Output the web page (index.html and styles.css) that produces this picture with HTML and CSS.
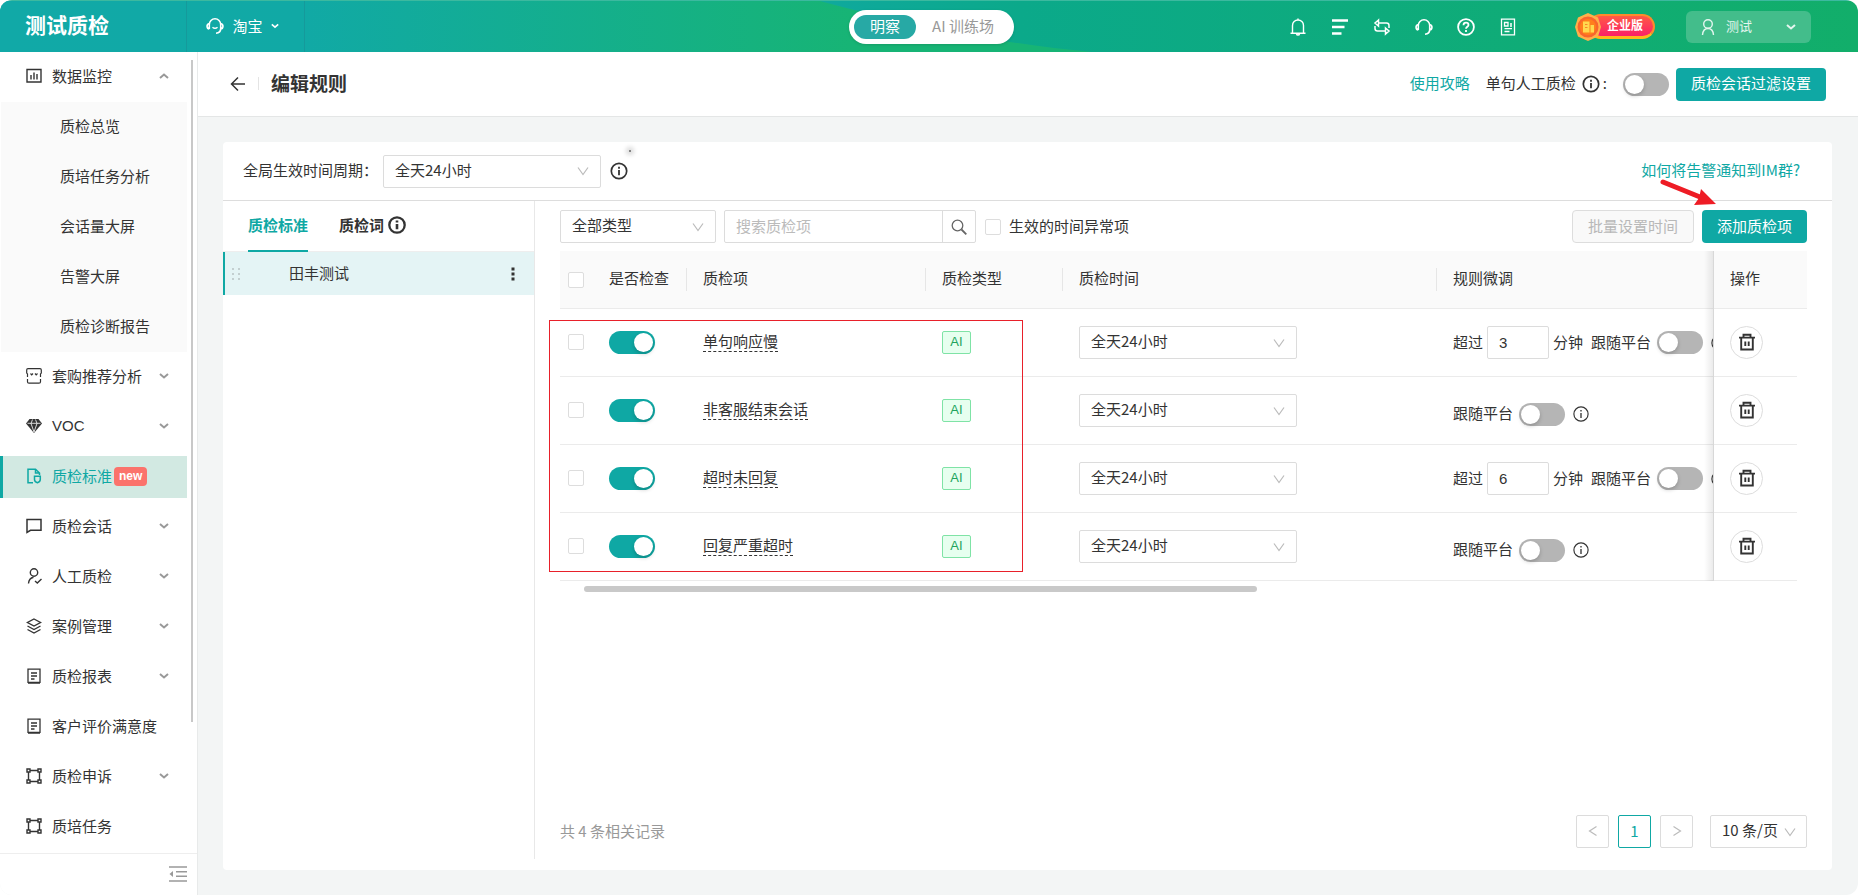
FILE: index.html
```html
<!DOCTYPE html>
<html lang="zh-CN">
<head>
<meta charset="utf-8">
<title>编辑规则</title>
<link rel="stylesheet" href="styles.css">
</head>
<body>
<svg class="sprite" aria-hidden="true">
  <symbol id="down" viewBox="0 0 12 12"><path d="M1 2.500 6 9.500l5-7" fill="none" stroke="currentColor" stroke-width="1.200"/></symbol>
  <symbol id="chev" viewBox="0 0 10 8"><path d="M1 2l4 3.500L9 2" fill="none" stroke="currentColor" stroke-width="2"/></symbol>
  <symbol id="info" viewBox="0 0 18 18"><circle cx="9" cy="9" r="7.700" fill="none" stroke="currentColor" stroke-width="1.700"/><path d="M9 8v5.200M9 4.800v1.900" stroke="currentColor" stroke-width="1.800"/></symbol>
  <symbol id="info-bold" viewBox="0 0 18 18"><circle cx="9" cy="9" r="7.700" fill="none" stroke="currentColor" stroke-width="2.300"/><path d="M9 8v5.200M9 4.500v2" stroke="currentColor" stroke-width="2.600"/></symbol>
  <symbol id="info-thin" viewBox="0 0 18 18"><circle cx="9" cy="9" r="8" fill="none" stroke="currentColor" stroke-width="1.300"/><path d="M9 7.800v5.700M9 4.500v1.800" stroke="currentColor" stroke-width="1.500"/></symbol>
  <symbol id="headset" viewBox="0 0 18 18"><path d="M3.300 12V7.500a5.700 5.700 0 0 1 11.400 0v4c0 2.700-1.700 4.500-4.700 4.700M3.300 6.500C.3 7 .3 11.500 3.300 12M14.700 6.500c3 .5 3 5 0 5.500" fill="none" stroke="currentColor" stroke-width="1.600"/></symbol>
  <symbol id="report" viewBox="0 0 16 16"><path d="M2 1.200h12v13.200H2zM5 5h6M5 8h6M5 11h3.500M2 15h12" fill="none" stroke="currentColor" stroke-width="1.300"/></symbol>
  <symbol id="nodes" viewBox="0 0 16 16"><path d="M1 1h3v3H1zM12 1h3v3h-3zM1 12h3v3H1zM12 12h3v3h-3zM4 2.500h8M4 13.500h8M2.500 4v8M13.500 4v8" fill="none" stroke="currentColor" stroke-width="1.400"/></symbol>
  <symbol id="trash" viewBox="0 0 18 18"><path d="M1 4.600h16M5.500 4V1.700h7V4M3.200 5v11.500h11.600V5M7.300 8.500v4.500M10.700 8.500v4.500" fill="none" stroke="currentColor" stroke-width="1.900"/></symbol>
</svg>

<div class="app">
  <header class="topbar">
    <svg class="wave" viewBox="0 0 1858 52" preserveAspectRatio="none" aria-hidden="true"><defs><linearGradient id="wg"><stop offset="0" stop-color="#11a9a7"/><stop offset=".28" stop-color="#11a9a5"/><stop offset=".78" stop-color="#17b475"/><stop offset="1" stop-color="#17b475"/></linearGradient></defs><path d="M0 0H820C900 22 1000 44 1092 52H0z" fill="url(#wg)"/></svg>
    <div class="brand">测试质检</div>
    <button class="platform"><svg class="i18" viewBox="0 0 18 18"><use href="#headset"/><path d="M6.500 10.200c1.500 1.300 3.500 1.300 5 0" fill="none" stroke="currentColor" stroke-width="1.500"/></svg>淘宝<svg class="i8"><use href="#chev"/></svg></button>
    <nav class="modes"><a class="mode on" href="#">明察</a><a class="mode" href="#">AI 训练场</a></nav>
    <div class="tools">
      <button aria-label="通知"><svg class="i18" viewBox="0 0 18 18"><path d="M3.500 15V7.500a5.500 5.500 0 0 1 11 0V15M1.500 15.200h15M9 2V.5M7.500 16c.3 1.400 2.700 1.400 3 0" fill="none" stroke="currentColor" stroke-width="1.400"/></svg></button>
      <button aria-label="列表"><svg class="i18" viewBox="0 0 18 18"><path d="M1 2.500h16M1 9h12.500M1 15.500h9.500" stroke="currentColor" stroke-width="2.600"/></svg></button>
      <button aria-label="切换"><svg class="i18" viewBox="0 0 18 18"><path d="M5 5h8.500q2.500 0 2.500 2.500V10M13 13H4.500Q2 13 2 10.500V8M5.500 2 2 5l3.500 3zM12.500 10l3.500 3-3.500 3z" fill="none" stroke="currentColor" stroke-width="1.500"/></svg></button>
      <button aria-label="客服"><svg class="i18"><use href="#headset"/></svg></button>
      <button aria-label="帮助"><svg class="i18" viewBox="0 0 18 18"><circle cx="9" cy="9" r="7.900" fill="none" stroke="currentColor" stroke-width="1.800"/><path d="M6.500 7.200C6.500 3.800 11.500 4 11.500 7c0 1.800-2.500 1.800-2.500 3.800M9 12v1.900" fill="none" stroke="currentColor" stroke-width="1.800"/></svg></button>
      <button aria-label="文档"><svg class="i18" viewBox="0 0 18 18"><path d="M2.500 1.200h13v15.600h-13zM5.500 4.500h3.500v3.500H5.500zM11 6h2M11 8h2M5.500 10.700h7.500M5.500 13.500h5" fill="none" stroke="currentColor" stroke-width="1.300"/></svg></button>
    </div>
    <div class="edition">
      <svg viewBox="0 0 28 30" aria-hidden="true"><path d="M14 1l10 4.500 3 9.500-3 9.500L14 29 4 24.500 1 15 4 5.500z" fill="#ffb04a"/><circle cx="14" cy="15" r="10.500" fill="#f8662c"/><circle cx="14" cy="15" r="8" fill="#ff7f1c"/><path d="M9 9.500h6.500v11H9zM16.500 13H20v7.500h-3.500z" fill="#ffd94f"/><path d="M11 12.500h2.500M11 15.500h2.500" stroke="#f8862c"/></svg><span>企业版</span>
    </div>
    <button class="user"><svg class="i18" viewBox="0 0 18 18"><circle cx="9" cy="6" r="4.300" fill="none" stroke="currentColor" stroke-width="1.400"/><path d="M3.500 17c.3-4 2.500-6.500 5.500-6.500s5.200 2.500 5.500 6.500" fill="none" stroke="currentColor" stroke-width="1.400"/></svg><span>测试</span><svg class="i10"><use href="#chev"/></svg></button>
  </header>

  <aside class="side">
    <nav class="menu">
      <a class="item" href="#"><svg class="i16" viewBox="0 0 16 16"><path d="M1 1.500h14v12.500H1z M5 7v4.500M8 4.500v7M11 6v5.500" fill="none" stroke="currentColor" stroke-width="1.400"/></svg><span>数据监控</span><svg class="i10 arrow flip"><use href="#chev"/></svg></a>
      <div class="sub">
        <a class="item" href="#">质检总览</a><a class="item" href="#">质培任务分析</a><a class="item" href="#">会话量大屏</a><a class="item" href="#">告警大屏</a><a class="item" href="#">质检诊断报告</a>
      </div>
      <a class="item" href="#"><svg class="i16" viewBox="0 0 16 16"><path d="M1.500 9V6L.7 5V2q0-1.300 1.300-1.300h12q1.300 0 1.300 1.300v3l-.8 1v3M4.500 5.500l1.200 1.300L7 5.500M9 5.500l1.200 1.300 1.300-1.300M1.500 11v2.700q0 1.500 1.500 1.500h10q1.500 0 1.500-1.500V11" fill="none" stroke="currentColor" stroke-width="1.200"/></svg><span>套购推荐分析</span><svg class="i10 arrow"><use href="#chev"/></svg></a>
      <a class="item" href="#"><svg class="i16" viewBox="0 0 16 16"><path d="M3.500 1h9L16 5.500 8 15 0 5.500z" fill="currentColor"/><path d="M1.500 5.300h13M5 5.500 8 14l3-8.500M5 5.500 6.500 1.500M11 5.500 9.500 1.500" fill="none" stroke="#fff" stroke-width=".8"/></svg><span class="latin">VOC</span><svg class="i10 arrow"><use href="#chev"/></svg></a>
      <a class="item current" href="#"><svg class="i16" viewBox="0 0 16 16"><path d="M7 14.800H2V1.200h7.500L13.500 5v2M9.500 1.200V5h4" fill="none" stroke="currentColor" stroke-width="1.500"/><path d="M8.500 8.300h5.800v3.200c0 2-1.500 2.800-2.900 3.300-1.400-.5-2.900-1.300-2.900-3.300z" fill="none" stroke="currentColor" stroke-width="1.500"/></svg><span>质检标准</span><b class="new">new</b></a>
      <a class="item" href="#"><svg class="i16" viewBox="0 0 16 16"><path d="M1 1.500h14v10.800H4.500L1 14.500z" fill="none" stroke="currentColor" stroke-width="1.500"/></svg><span>质检会话</span><svg class="i10 arrow"><use href="#chev"/></svg></a>
      <a class="item" href="#"><svg class="i16" viewBox="0 0 16 16"><circle cx="8" cy="4.500" r="3.700" fill="none" stroke="currentColor" stroke-width="1.400"/><path d="M2.500 15.500c.3-3.500 2-5.500 5-6.200M9 13l2.300 2L15.500 11" fill="none" stroke="currentColor" stroke-width="1.400"/></svg><span>人工质检</span><svg class="i10 arrow"><use href="#chev"/></svg></a>
      <a class="item" href="#"><svg class="i16" viewBox="0 0 16 16"><path d="M8 1l6.500 3.500L8 8 1.500 4.500zM1.500 8 8 11.500 14.500 8M1.500 11.500 8 15l6.500-3.500" fill="none" stroke="currentColor" stroke-width="1.400"/></svg><span>案例管理</span><svg class="i10 arrow"><use href="#chev"/></svg></a>
      <a class="item" href="#"><svg class="i16"><use href="#report"/></svg><span>质检报表</span><svg class="i10 arrow"><use href="#chev"/></svg></a>
      <a class="item" href="#"><svg class="i16"><use href="#report"/></svg><span>客户评价满意度</span></a>
      <a class="item" href="#"><svg class="i16"><use href="#nodes"/></svg><span>质检申诉</span><svg class="i10 arrow"><use href="#chev"/></svg></a>
      <a class="item" href="#"><svg class="i16"><use href="#nodes"/></svg><span>质培任务</span></a>
    </nav>
    <i class="thumb"></i>
    <div class="side-foot"><button aria-label="收起菜单"><svg class="i18" viewBox="0 0 18 18"><path d="M0 2h18M7 6.800h11M7 11.300h11M0 16h18" stroke="currentColor" stroke-width="1.400"/><path d="M4 6v6L.5 9z" fill="currentColor"/></svg></button></div>
  </aside>

  <main class="main">
    <div class="pagehead">
      <button class="back" aria-label="返回"><svg class="i16" viewBox="0 0 16 16"><path d="M8 1.500 1.500 8 8 14.500M1.500 8H15" fill="none" stroke="currentColor" stroke-width="1.500"/></svg></button>
      <h1>编辑规则</h1>
      <div class="headright">
        <a class="link" href="#">使用攻略</a>
        <label class="manual" for="manual"><span>单句人工质检</span><svg class="i18"><use href="#info"/></svg><span>:</span></label>
        <input class="switch" type="checkbox" id="manual">
        <button class="btn primary">质检会话过滤设置</button>
      </div>
    </div>

    <section class="card">
      <div class="period">
        <label for="period">全局生效时间周期：</label>
        <span class="select wide"><select id="period"><option>全天24小时</option></select><svg class="i12"><use href="#down"/></svg></span>
        <svg class="i18"><use href="#info"/></svg>
        <i class="spark"></i>
        <a class="link" href="#">如何将告警通知到IM群?</a>
        <svg class="pointer" viewBox="0 0 56 28" aria-hidden="true"><path d="M3 4 40 19" stroke="#ee1c25" stroke-width="5" stroke-linecap="round"/><path d="M41 11 56 26 34 27 39 20z" fill="#ee1c25"/></svg>
      </div>
      <div class="split">
        <div class="left">
          <div class="tabs"><button class="tab on">质检标准</button><button class="tab">质检词<svg class="i18"><use href="#info-bold"/></svg></button></div>
          <div class="standard">
            <svg class="grip" viewBox="0 0 10 12"><path d="M1 1h2M7 1h2M1 6h2M7 6h2M1 11h2M7 11h2" stroke="#c3cfd0" stroke-width="2"/></svg>
            <span>田丰测试</span>
            <button aria-label="更多"><svg class="more" viewBox="0 0 4 14"><path d="M.5 2h3M.5 7h3M.5 12h3" stroke="#333" stroke-width="3"/></svg></button>
          </div>
        </div>
        <div class="right">
          <div class="filters">
            <span class="select kind"><select aria-label="类型"><option>全部类型</option></select><svg class="i12"><use href="#down"/></svg></span>
            <div class="search"><input type="text" placeholder="搜索质检项" aria-label="搜索质检项"><button aria-label="搜索"><svg class="i16" viewBox="0 0 16 16"><circle cx="6.500" cy="6.500" r="5.300" fill="none" stroke="currentColor" stroke-width="1.300"/><path d="M10.500 10.500 15.300 15.300" stroke="currentColor" stroke-width="1.800"/></svg></button></div>
            <label class="odd"><input class="check" type="checkbox"><span>生效的时间异常项</span></label>
            <button class="btn off" disabled>批量设置时间</button>
            <button class="btn primary">添加质检项</button>
          </div>
          <div class="tablebox">
          <table>
            <colgroup><col class="c1"><col class="c2"><col class="c3"><col class="c4"><col class="c5"><col><col class="c7"><col class="c8"></colgroup>
            <thead><tr><th class="pick"><input class="check" type="checkbox" aria-label="全选"></th><th><span>是否检查</span></th><th><span>质检项</span></th><th><span>质检类型</span></th><th><span>质检时间</span></th><th><span>规则微调</span></th><th class="op"><span>操作</span></th><th></th></tr></thead>
            <tbody>
              <tr><td class="pick"><input class="check" type="checkbox" aria-label="选择"></td><td><input class="switch" type="checkbox" checked aria-label="是否检查"></td><td><span class="name">单句响应慢</span></td><td><span class="tag">AI</span></td><td><span class="select wide"><select aria-label="质检时间"><option>全天24小时</option></select><svg class="i12"><use href="#down"/></svg></span></td>
                <td class="tune"><div class="adjust"><label><span>超过</span><input class="num" type="text" value="3"><span>分钟</span></label><label class="follow"><span>跟随平台</span><input class="switch" type="checkbox"></label><svg class="i16"><use href="#info-thin"/></svg></div></td><td class="op"><button class="del" aria-label="删除"><svg class="i18"><use href="#trash"/></svg></button></td><td class="gut"></td></tr>
              <tr><td class="pick"><input class="check" type="checkbox" aria-label="选择"></td><td><input class="switch" type="checkbox" checked aria-label="是否检查"></td><td><span class="name">非客服结束会话</span></td><td><span class="tag">AI</span></td><td><span class="select wide"><select aria-label="质检时间"><option>全天24小时</option></select><svg class="i12"><use href="#down"/></svg></span></td>
                <td class="tune"><div class="adjust low"><label class="follow"><span>跟随平台</span><input class="switch" type="checkbox"></label><svg class="i16"><use href="#info-thin"/></svg></div></td><td class="op"><button class="del" aria-label="删除"><svg class="i18"><use href="#trash"/></svg></button></td><td class="gut"></td></tr>
              <tr><td class="pick"><input class="check" type="checkbox" aria-label="选择"></td><td><input class="switch" type="checkbox" checked aria-label="是否检查"></td><td><span class="name">超时未回复</span></td><td><span class="tag">AI</span></td><td><span class="select wide"><select aria-label="质检时间"><option>全天24小时</option></select><svg class="i12"><use href="#down"/></svg></span></td>
                <td class="tune"><div class="adjust"><label><span>超过</span><input class="num" type="text" value="6"><span>分钟</span></label><label class="follow"><span>跟随平台</span><input class="switch" type="checkbox"></label><svg class="i16"><use href="#info-thin"/></svg></div></td><td class="op"><button class="del" aria-label="删除"><svg class="i18"><use href="#trash"/></svg></button></td><td class="gut"></td></tr>
              <tr><td class="pick"><input class="check" type="checkbox" aria-label="选择"></td><td><input class="switch" type="checkbox" checked aria-label="是否检查"></td><td><span class="name">回复严重超时</span></td><td><span class="tag">AI</span></td><td><span class="select wide"><select aria-label="质检时间"><option>全天24小时</option></select><svg class="i12"><use href="#down"/></svg></span></td>
                <td class="tune"><div class="adjust low"><label class="follow"><span>跟随平台</span><input class="switch" type="checkbox"></label><svg class="i16"><use href="#info-thin"/></svg></div></td><td class="op"><button class="del" aria-label="删除"><svg class="i18"><use href="#trash"/></svg></button></td><td class="gut"></td></tr>
            </tbody>
          </table>
          <i class="mark"></i>
          </div>
          <div class="hscroll"></div>
          <div class="pager">
            <span class="total">共 4 条相关记录</span>
            <button aria-label="上一页"><svg class="i12" viewBox="0 0 12 12"><path d="M9.500 1.500 2.500 6l7 4.500" fill="none" stroke="currentColor" stroke-width="1.200"/></svg></button>
            <button class="on">1</button>
            <button aria-label="下一页"><svg class="i12" viewBox="0 0 12 12"><path d="M2.500 1.500l7 4.500-7 4.500" fill="none" stroke="currentColor" stroke-width="1.200"/></svg></button>
            <span class="select size"><select aria-label="每页条数"><option>10 条/页</option></select><svg class="i12"><use href="#down"/></svg></span>
          </div>
        </div>
      </div>
    </section>
  </main>
</div>
</body>
</html>
```
FILE: styles.css
```css
* { box-sizing: border-box; }
body { margin: 0; background: #fff; }
body, button, input, select { font: 15px/22px "Noto Sans CJK SC", "Liberation Sans", sans-serif; color: #333; }
button { background: none; border: 0; padding: 0; display: flex; align-items: center; justify-content: center; }
a { color: inherit; text-decoration: none; }
input, h1 { margin: 0; }
svg { display: block; flex: none; }
.sprite { display: none; }
.i8 { width: 8px; height: 8px; }
.i10 { width: 10px; height: 10px; }
.i12 { width: 12px; height: 12px; }
.i16 { width: 16px; height: 16px; }
.i18 { width: 18px; height: 18px; }

.app { display: grid; grid-template: 52px minmax(0, 1fr) / 198px minmax(0, 1fr); min-height: 100vh; border-radius: 12px; overflow: hidden; background: #f3f5f5; }

/* top bar */
.topbar { grid-column: 1 / -1; position: relative; display: flex; align-items: center; color: #fff; background: linear-gradient(90deg, #11a9a5 40%, #0ba98a 55%, #12ae6a); border-top: 1px solid #3cb99f; }
.wave { position: absolute; inset: 0; width: 100%; height: 100%; }
.topbar > :not(.wave) { position: relative; }
.brand { width: 186px; padding-left: 25px; padding-bottom: 6px; font-size: 21px; line-height: 28px; font-weight: 700; }
.platform { width: 119px; height: 51px; gap: 8px; padding: 0 6px 2px 0; color: #fff; border: solid #159a9b; border-width: 0 1px; }
.modes { margin: 0 auto 0 544px; display: flex; align-items: center; height: 34px; padding: 0 5px; background: #fff; border-radius: 17px; box-shadow: 0 1px 3px #0002; }
.mode { height: 24px; line-height: 22px; padding: 0 16px; border-radius: 12px; color: #999; }
.mode + .mode { padding-right: 15px; }
.mode.on { background: #27a9a5; color: #fff; }
.tools { display: flex; gap: 24px; }
.tools button { color: #fff; }
.edition { display: flex; align-items: center; margin: 0 31px 0 57px; }
.edition svg { width: 28px; height: 30px; z-index: 1; }
.edition span { margin-left: -14px; padding: 0 10px 0 17px; height: 25px; line-height: 18px; font-size: 12px; font-weight: 700; border: 2px solid #ff8a2c; border-bottom: 3px solid #ffb81c; border-radius: 13px; background: linear-gradient(#ff5a45, #fb1f68); }
.user { width: 125px; height: 32px; margin-right: 47px; padding: 0 15px 0 13px; gap: 9px; color: #e4f6ef; font-size: 13px; background: #43bd8b; border-radius: 6px; }
.user span { margin-right: auto; padding-bottom: 2px; }

/* side menu */
.side { position: relative; display: flex; flex-direction: column; background: #fff; border-right: 1px solid #e8eaea; }
.menu { flex: 1; display: flex; flex-direction: column; padding-right: 10px; }
.item { display: flex; align-items: center; height: 42px; margin: 4px 0; padding: 0 18px 2px 23px; border-left: 3px solid transparent; }
.menu > .item > span { margin-left: 10px; }
.arrow { margin-left: auto; color: #999; }
.flip { transform: rotate(180deg); }
.sub { display: flow-root; background: #fafafa; margin-left: 1px; }
.sub .item { padding-left: 56px; }
.sub .item + .item { margin-top: 8px; }
.latin { font-family: "Liberation Sans", sans-serif; }
.current { background: #d2e9e2; border-color: #0fa8a4; color: #0fa8a4; }
.new { margin-left: 2px; padding: 0 5px; border-radius: 4px; background: #fb736c; color: #fff; font: 700 12px/19px "Liberation Sans", sans-serif; }
.thumb { position: absolute; right: 4px; top: 8px; width: 2px; height: 662px; background: #c8c8c8; }
.side-foot { height: 42px; border-top: 1px solid #eee; display: flex; align-items: center; justify-content: flex-end; padding: 0 10px 2px; }
.side-foot button { color: #999; }

/* page heading */
.main { display: flex; flex-direction: column; min-width: 0; }
.pagehead { display: flex; align-items: center; height: 65px; padding: 0 32px; background: #fff; border-bottom: 1px solid #e4e6e6; }
.back { padding-right: 12px; }
h1 { padding: 0 0 2px 13px; font-size: 19px; line-height: 26px; position: relative; }
h1::before { content: ""; position: absolute; left: 0; top: 7px; height: 13px; border-left: 1px solid #e4e4e4; }
.headright { margin-left: auto; display: flex; align-items: center; }
.link, .manual span, .period label, .standard span, .odd span, .adjust span, .total { padding-bottom: 2px; }
.link { color: #0fa8a4; }
.manual { display: flex; align-items: center; gap: 6px; margin: 0 16px; }
.manual svg + span { margin-left: -3px; }
.btn { height: 33px; padding: 0 15px 2px; border-radius: 4px; white-space: nowrap; }
.headright .btn { margin-left: 7px; }
.primary { background: #0fa8a4; color: #fff; }
.off { border: 1px solid #ddd; background: #f9f9f9; color: #b8b8b8; }

.switch { appearance: none; flex: none; display: block; width: 46px; height: 23px; padding: 2px; border-radius: 12px; background: #b5b5b5; }
.switch::before { content: ""; display: block; width: 19px; height: 19px; border-radius: 50%; background: #fff; box-shadow: 0 2px 4px #0003; }
.switch:checked { background: #0fa8a4; }
.switch:checked::before { margin-left: auto; }
.check { appearance: none; flex: none; display: block; width: 16px; height: 16px; border: 1px solid #ddd; border-radius: 2px; background: #fff; }

.select { display: grid; align-items: center; height: 33px; border: 1px solid #dcdcdc; border-radius: 2px; background: #fff; }
.select > * { grid-area: 1 / 1; }
.select select { appearance: none; width: 100%; height: 31px; border: 0; padding: 0 11px 3px; background: none; }
.select svg { justify-self: end; margin-right: 11px; color: #bbb; pointer-events: none; }
.wide { width: 218px; }
.kind { width: 156px; }

/* card */
.card { flex: 1; display: flex; flex-direction: column; margin: 25px 26px 25px 25px; background: #fff; border-radius: 4px; }
.period { position: relative; display: flex; align-items: center; height: 59px; padding: 0 32px 0 20px; border-bottom: 1px solid #ddd; }
.period label { width: 140px; white-space: nowrap; }
.period > svg.i18 { margin-left: 9px; }
.period .link { margin-left: auto; }
.spark { align-self: flex-start; width: 2px; height: 2px; margin: 8px 0 0 1px; border-radius: 50%; background: #666; box-shadow: 0 0 4px 3px #0002; }
.pointer { position: absolute; right: 116px; top: 36px; width: 56px; height: 28px; z-index: 1; }
.split { flex: 1; display: grid; grid-template-columns: 312px minmax(0, 1fr); }
.left { border-right: 1px solid #e8e8e8; margin-bottom: 11px; }
.tabs { display: flex; gap: 31px; height: 51px; padding: 0 25px; border-bottom: 1px solid #eee; }
.tab { height: 51px; gap: 4px; padding-bottom: 2px; font-weight: 700; border-bottom: 2px solid transparent; }
.tab.on { color: #0fa8a4; border-color: #0fa8a4; }
.standard { display: flex; align-items: center; height: 43px; padding: 0 19px 0 6px; border-left: 2px solid #0fa8a4; background: #e4f4f5; }
.grip { width: 10px; height: 12px; margin-right: 48px; }
.standard button { margin-left: auto; }
.more { width: 4px; height: 14px; }

.right { display: flex; flex-direction: column; padding: 9px 25px 22px; min-width: 0; }
.filters { display: flex; align-items: center; gap: 8px; }
.search { display: flex; width: 252px; height: 33px; border: 1px solid #dcdcdc; border-radius: 2px; }
.search input { flex: 1; min-width: 0; border: 0; padding: 0 11px 2px; background: none; }
.search input::placeholder { color: #bbb; }
.search button { width: 33px; border-left: 1px solid #dcdcdc; color: #666; }
.odd { display: flex; align-items: center; gap: 8px; margin: 0 auto 0 1px; white-space: nowrap; }

.tablebox { position: relative; margin-top: 8px; }
table { width: 100%; table-layout: fixed; border-collapse: separate; border-spacing: 0; }
.c1 { width: 33px; } .c2 { width: 94px; } .c3 { width: 239px; } .c4 { width: 137px; } .c5 { width: 374px; } .c7 { width: 83px; } .c8 { width: 10px; }
th, td { padding: 0 0 0 16px; text-align: left; font-weight: 400; border-bottom: 1px solid #ebebeb; white-space: nowrap; }
th { height: 58px; background: #fafafa; }
td { height: 68px; }
th span { display: block; padding-bottom: 3px; }
th:nth-child(n+2):nth-child(-n+5) { background: linear-gradient(#e6e6e6, #e6e6e6) right center / 1px 23px no-repeat #fafafa; }
.pick { padding-left: 8px; }
td.pick { padding-bottom: 2px; }
th:last-child, .gut { padding: 0; }
.gut { border: 0; }
.name { display: table; line-height: 20px; margin-bottom: 2px; border-bottom: 1px dashed #333; }
.tag { display: block; width: 29px; height: 23px; border: 1px solid #7fe3a6; border-radius: 2px; background: #e6ffef; color: #21a35c; font: 13px/20px "Liberation Sans", sans-serif; text-align: center; }
.tune { overflow: hidden; }
.adjust { display: flex; align-items: center; gap: 8px; }
.adjust label { display: flex; align-items: center; gap: 4px; }
.adjust .follow { gap: 6px; }
.low { padding-top: 7px; }
.num { width: 62px; height: 33px; padding: 0 11px 1px; border: 1px solid #dcdcdc; border-radius: 2px; font-family: "Liberation Sans", sans-serif; }
.op { position: relative; background: #fff; }
th.op { background: #fafafa; }
.op::before { content: ""; position: absolute; right: 100%; top: 0; bottom: -1px; width: 9px; background: linear-gradient(90deg, #0000, #00000014); border-right: 1px solid #d8d8d8; }
.del { width: 33px; height: 33px; padding-bottom: 1px; border: 1px solid #ddd; border-radius: 50%; }
.mark { position: absolute; left: -11px; top: 69px; width: 474px; bottom: 9px; border: 1px solid #e8202a; pointer-events: none; }
.hscroll { width: 54%; height: 6px; margin: 5px 0 0 24px; border-radius: 3px; background: #c9c9c9; }

.pager { display: flex; align-items: center; gap: 9px; margin-top: auto; }
.total { margin-right: auto; color: #999; }
.pager button { width: 33px; height: 33px; padding-bottom: 1px; border: 1px solid #dcdcdc; border-radius: 2px; color: #bbb; }
.pager .on { border-color: #0fa8a4; color: #0fa8a4; }
.size { width: 97px; margin-left: 8px; }
.size svg { margin-right: 10px; }
```
